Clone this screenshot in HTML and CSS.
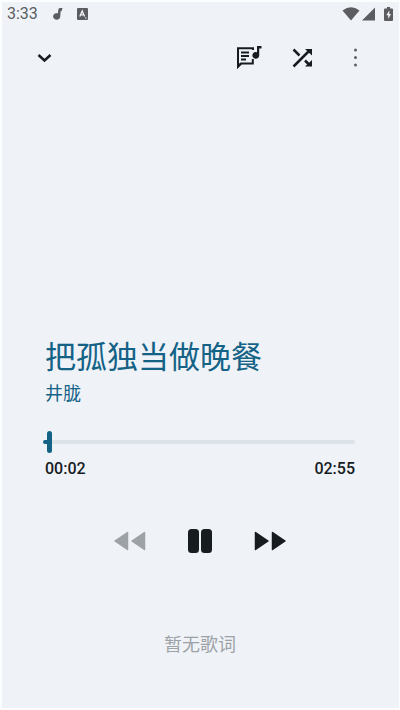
FILE: index.html
```html
<!DOCTYPE html>
<html lang="zh-CN">
<head>
<meta charset="utf-8">
<meta name="viewport" content="width=device-width, initial-scale=1">
<title>把孤独当做晚餐</title>
<link rel="stylesheet" href="styles.css">
</head>
<body>
<div class="screen">
  <header class="status">
    <div class="status-group">
      <span class="clock">3:33</span>
      <svg class="note" viewBox="0 0 10 14" width="10" height="14" aria-hidden="true"><path d="M5.500 2Q6 1 7 1H9.500L8.500 4.200H7.600L7.300 9.500A3.600 3.300 0 1 1 4.800 6.300Z"/></svg>
      <svg class="badge" viewBox="0 0 11 12" width="11" height="12" aria-hidden="true"><rect width="11" height="12" rx="1"/><path d="M2.800 8.500L5.200 3L7.600 8.500M3.600 6.800H6.800" fill="none" stroke="#eff3f8" stroke-width="1.300"/><path d="M8 10H9.500" stroke="#eff3f8"/></svg>
    </div>
    <div class="status-group status-right">
      <svg viewBox="0 0 18 14" width="18" height="14" aria-hidden="true"><path d="M.5 3.600Q9-3 17.500 3.600L9 13.500Z"/></svg>
      <svg viewBox="0 0 13 14" width="13" height="14" aria-hidden="true"><path d="M13 .5V13.500H0Z"/></svg>
      <svg class="battery" viewBox="0 0 9 14" width="9" height="14" aria-hidden="true"><path d="M3 0H6V1.500H8Q9 1.500 9 2.500V13Q9 14 8 14H1Q0 14 0 13V2.500Q0 1.500 1 1.500H3Z"/><path d="M5.300 3.500L2.300 8.300H4.200V12L7 7H5.300Z" fill="#eff3f8"/></svg>
    </div>
  </header>

  <nav class="toolbar">
    <button class="icon-button" aria-label="收起"><svg viewBox="0 0 24 24" width="24" height="24"><path class="line" d="M6.500 9L12.500 14.500L18.500 9"/></svg></button>
    <div class="tools">
      <button class="icon-button" aria-label="歌词"><svg viewBox="1 -1 28 28" width="28" height="28"><path class="line thin" d="M19 5V3.300H4V21.500L7 18.500H18.800V14"/><path d="M3 18V24L8 19Z"/><path class="line thin" d="M7 7.500H15M7 11H15M7 14.500H12"/><path d="M23 1H27.500V3.500H25.200V10.500A3.400 3.400 0 1 1 23 7.200Z"/></svg></button>
      <button class="icon-button" aria-label="随机播放"><svg viewBox="0 0 24 24" width="24" height="24"><path class="line" d="M3.500 20.500L19 5M3.500 3.500L9.500 9.500M15 14.500L19.500 19"/><path d="M15 3H22V9.500ZM22 14V20.500H15Z"/></svg></button>
      <button class="icon-button" aria-label="更多"><svg class="dots" viewBox="0 0 24 24" width="24" height="24"><circle cx="12.500" cy="4" r="1.500"/><circle cx="12.500" cy="11.500" r="1.500"/><circle cx="12.500" cy="19" r="1.500"/></svg></button>
    </div>
  </nav>

  <main class="player">
    <h1 class="title">把孤独当做晚餐</h1>
    <p class="artist">井胧</p>
    <input class="seek" type="range" min="0" max="175" value="2" aria-label="播放进度">
    <div class="times"><span>00:02</span><span>02:55</span></div>
    <div class="controls">
      <button class="control previous" aria-label="上一首"><svg viewBox="0 0 32 20" width="32" height="20"><path d="M1 10L13.500 1.500V18.500ZM18 10L30.500 1.500V18.500Z"/></svg></button>
      <button class="control" aria-label="暂停"><svg viewBox="0 0 26 26" width="26" height="26"><rect x="1" y="1" width="11" height="24" rx="3.500"/><rect x="14" y="1" width="11" height="24" rx="3.500"/></svg></button>
      <button class="control" aria-label="下一首"><svg viewBox="0 0 32 20" width="32" height="20"><path d="M1.500 1.500L14 10L1.500 18.500ZM18.500 1.500L31 10L18.500 18.500Z"/></svg></button>
    </div>
    <p class="lyrics">暂无歌词</p>
  </main>
</div>
</body>
</html>
```
FILE: styles.css
```css
* { box-sizing: border-box; }
body {
  margin: 0;
  background: #fff;
  font-family: Roboto, "Noto Sans CJK SC", sans-serif;
  color: #171c1f;
}
.screen {
  min-height: 100vh;
  border: 2px solid #fbfdfe;
  border-right-width: 1px;
  background: #eff3f8;
}
button {
  padding: 0;
  border: 0;
  background: none;
  color: inherit;
}
svg { display: block; fill: currentColor; }
.status {
  display: flex;
  justify-content: space-between;
  height: 24px;
  padding: 0 6px 0 5px;
  color: #5b5d60;
}
.status-group { display: flex; align-items: center; }
.clock { font-size: 16px; line-height: 24px; }
.note { margin-left: 15px; }
.badge { margin-left: 14px; }
.status-right { gap: 2px; }
.battery { margin-left: 7px; }
.toolbar {
  display: flex;
  justify-content: space-between;
  align-items: center;
  height: 64px;
  padding: 0 20px 0 18px;
}
.tools { display: flex; gap: 5px; }
.icon-button {
  display: grid;
  place-items: center;
  width: 48px;
  height: 48px;
}
.line { fill: none; stroke: currentColor; stroke-width: 2.5; }
.thin { stroke-width: 2; }
.dots { color: #5c6165; }
.player { padding: 246px 44px 0 43px; }
.title {
  margin: 0;
  font-size: 31px;
  line-height: 44px;
  font-weight: 400;
  color: #146286;
}
.artist {
  margin: 0;
  font-size: 18px;
  line-height: 28px;
  color: #146286;
}
.seek {
  appearance: none;
  display: block;
  width: calc(100% + 2px);
  height: 22px;
  margin: 23px 0 0 -2px;
  background: none;
}
.seek::-webkit-slider-runnable-track {
  height: 4px;
  border-radius: 2px;
  background: linear-gradient(to right, #146286 5px, #dce3e9 5px);
}
.seek::-webkit-slider-thumb {
  appearance: none;
  width: 5px;
  height: 22px;
  margin-top: -9px;
  border-radius: 3px;
  background: #146286;
}
.times {
  display: flex;
  justify-content: space-between;
  margin-top: 4px;
  font-size: 16px;
  line-height: 24px;
  font-weight: 500;
}
.controls {
  display: flex;
  justify-content: center;
  align-items: center;
  gap: 22px;
  margin-top: 36px;
}
.control {
  display: grid;
  place-items: center;
  width: 48px;
  height: 48px;
}
.control path { stroke: currentColor; stroke-width: 1.5; stroke-linejoin: round; }
.previous { color: #9da2a6; }
.lyrics {
  margin: 65px 0 0;
  font-size: 18px;
  line-height: 30px;
  text-align: center;
  color: #9da2a6;
}
```
